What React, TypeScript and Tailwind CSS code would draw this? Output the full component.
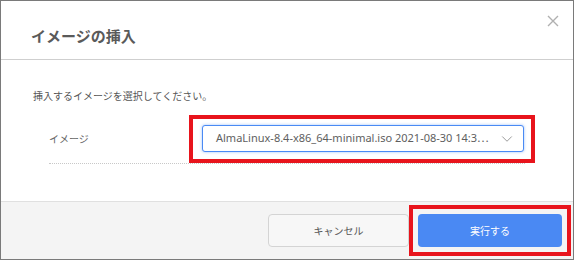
import { ChevronDown } from 'lucide-react';

const jp = { fontFamily: '"Noto Sans CJK JP", "Noto Sans", sans-serif' };

export default function App() {
  return (
    <div
      className="relative flex h-[260px] w-[574px] flex-col border border-[#7a7a7a] bg-white text-[#555]"
      style={jp}
    >
      {/* header */}
      <div className="h-[59px] shrink-0 border-b border-[#cfcfcf] pl-[30px] pt-[25px]">
        <h1 className="text-[15px] font-bold leading-[20px] text-[#5a5a5a]">
          イメージの挿入
        </h1>
      </div>
      <button className="absolute right-[14px] top-[14px] h-[12px] w-[12px]">
        <svg viewBox="0 0 12 12" className="h-[12px] w-[12px]">
          <path d="M1 1L11 11M11 1L1 11" stroke="#b0b0b0" strokeWidth="1.4" />
        </svg>
      </button>

      {/* body */}
      <div className="flex-1 pl-[32px] pt-[29px]">
        <p className="text-[10px] leading-[14px] text-[#555]">
          挿入するイメージを選択してください。
        </p>
        <div className="ml-[16px] mt-[12px] flex w-[476px] items-center border-b border-dotted border-[#c8c8c8] pb-[11px] pt-[10px]">
          <span className="w-[153px] text-[10px] text-[#666]">イメージ</span>
          <div className="flex h-[27px] w-[322px] items-center justify-between rounded-[3px] border border-[#4a8af4] bg-white pl-[13px] pr-[7px] shadow-[0_0_3px_rgba(74,138,244,0.55)]">
            <span
              className="text-[11px] text-[#5e5e5e]"
              style={{ fontFamily: '"Noto Sans", "Noto Sans CJK JP", sans-serif' }}
            >
              AlmaLinux-8.4-x86_64-minimal.iso 2021-08-30 14:3⋯
            </span>
            <ChevronDown className="h-[18px] w-[18px] text-[#909090]" strokeWidth={1.2} />
          </div>
        </div>
      </div>

      {/* footer */}
      <div className="flex h-[58px] shrink-0 items-start justify-end gap-[9px] border-t border-[#e0e0e0] bg-[#f4f4f4] pr-[11px] pt-[12px]">
        <button className="h-[33px] w-[141px] rounded-[4px] border border-[#d4d4d4] bg-[#f7f7f7] text-[10px] text-[#555]">
          キャンセル
        </button>
        <button className="h-[33px] w-[144px] rounded-[4px] bg-[#4a89f3] text-[10px] text-white">
          実行する
        </button>
      </div>

      {/* annotation frames */}
      <div className="pointer-events-none absolute left-[188px] top-[114px] h-[48px] w-[346px] border-[4px] border-[#e8141c]" />
      <div className="pointer-events-none absolute left-[408px] top-[204px] h-[51px] w-[162px] border-[4px] border-[#e8141c]" />
    </div>
  );
}
